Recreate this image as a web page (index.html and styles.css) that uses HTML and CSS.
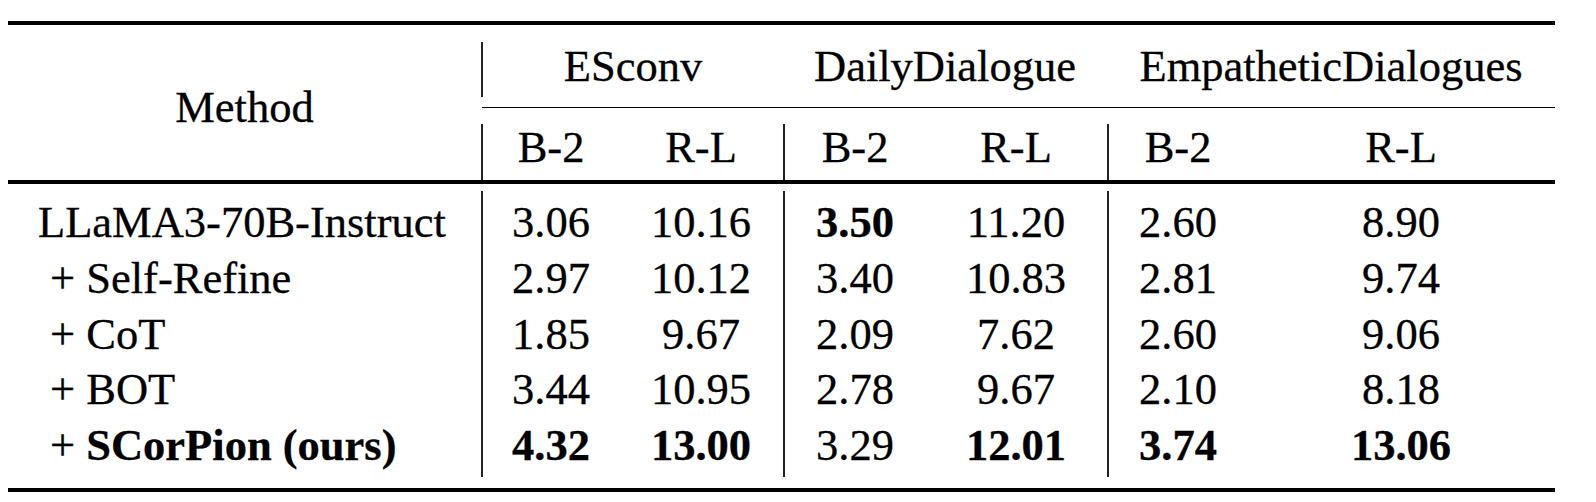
FILE: index.html
```html
<!DOCTYPE html>
<html lang="en">
<head>
    <meta charset="UTF-8">
    <meta name="viewport" content="width=device-width, initial-scale=1.0">
    <title>Results</title>
    <link rel="stylesheet" href="styles.css">
</head>
<body>
    <div class="results">
        <div class="head">
            <div class="method-head">Method</div>
            <div class="groups">
                <div class="group-row">
                    <div class="sep">ESconv</div>
                    <div>DailyDialogue</div>
                    <div>EmpatheticDialogues</div>
                </div>
                <div class="cmid"></div>
                <div class="metric-row">
                    <div class="sep">B-2</div>
                    <div>R-L</div>
                    <div class="sep">B-2</div>
                    <div>R-L</div>
                    <div class="sep">B-2</div>
                    <div>R-L</div>
                </div>
            </div>
        </div>
        <div class="body">
            <div class="row">
                <div class="method">LLaMA3-70B-Instruct</div>
                <div class="sep">3.06</div>
                <div>10.16</div>
                <div class="sep best">3.50</div>
                <div>11.20</div>
                <div class="sep">2.60</div>
                <div>8.90</div>
            </div>
            <div class="row">
                <div class="method variant">+ Self-Refine</div>
                <div class="sep">2.97</div>
                <div>10.12</div>
                <div class="sep">3.40</div>
                <div>10.83</div>
                <div class="sep">2.81</div>
                <div>9.74</div>
            </div>
            <div class="row">
                <div class="method variant">+ CoT</div>
                <div class="sep">1.85</div>
                <div>9.67</div>
                <div class="sep">2.09</div>
                <div>7.62</div>
                <div class="sep">2.60</div>
                <div>9.06</div>
            </div>
            <div class="row">
                <div class="method variant">+ BOT</div>
                <div class="sep">3.44</div>
                <div>10.95</div>
                <div class="sep">2.78</div>
                <div>9.67</div>
                <div class="sep">2.10</div>
                <div>8.18</div>
            </div>
            <div class="row">
                <div class="method variant">+ <b>SCorPion (ours)</b></div>
                <div class="sep best">4.32</div>
                <div class="best">13.00</div>
                <div class="sep">3.29</div>
                <div class="best">12.01</div>
                <div class="sep best">3.74</div>
                <div class="best">13.06</div>
            </div>
        </div>
    </div>
</body>
</html>
```

FILE: styles.css
```css
* {
    box-sizing: border-box;
}
body {
    margin: 0;
    background-color: #ffffff;
    color: #000;
    font-family: "Liberation Serif", "Times New Roman", serif;
}
.results {
    width: 1547px;
    margin: 21px 0 0 8px;
    border-top: 4px solid #000;
    border-bottom: 4px solid #000;
    font-size: 44.5px;
    -webkit-text-stroke: 0.3px #000;
}
.head {
    display: flex;
    border-bottom: 4px solid #000;
}
.method-head {
    width: 473px;
    padding-top: 59.7px;
    line-height: 44.5px;
    text-align: center;
}
.groups {
    flex: 1;
    padding-top: 17px;
}
.group-row {
    display: grid;
    grid-template-columns: 302px 324px 448px;
    height: 55px;
}
.group-row div,
.metric-row div {
    text-align: center;
    line-height: 44.5px;
}
.group-row div {
    padding-top: 1.7px;
}
.cmid {
    height: 1px;
    background-color: #000;
    margin: 10px 0 16px 1px;
}
.metric-row {
    display: grid;
    grid-template-columns: 138px 164px 142px 182px 140px 308px;
    height: 56px;
}
.metric-row div {
    padding-top: 1.4px;
}
.sep {
    border-left: 2px solid #222;
}
.body {
    padding: 6.7px 0 11.3px;
}
.row {
    display: grid;
    grid-template-columns: 473px 138px 164px 142px 182px 140px 308px;
    line-height: 55.6px;
}
.row div {
    text-align: center;
}
.row:first-child div {
    padding-top: 4.8px;
}
.row:last-child div {
    padding-bottom: 3.2px;
}
.row .method {
    text-align: left;
    padding-left: 30px;
}
.row .variant {
    padding-left: 42px;
}
.best {
    font-weight: bold;
}
```
